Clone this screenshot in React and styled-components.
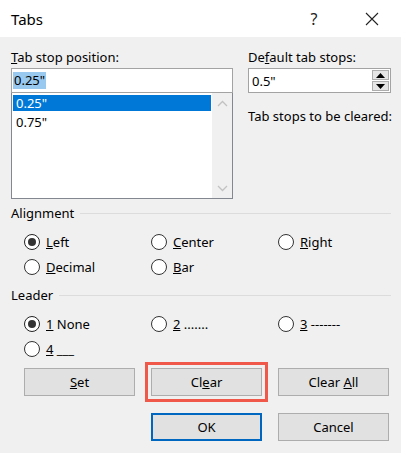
import React from 'react';
import styled, { createGlobalStyle } from 'styled-components';

const GlobalStyle = createGlobalStyle`
  html, body { margin: 0; padding: 0; background: #f0f0f0; }
  body { font-family: 'Noto Sans', 'Open Sans', sans-serif; font-size: 13px; color: #000; }
  * { box-sizing: border-box; }
`;

const Dialog = styled.div`
  width: 401px;
  height: 453px;
  background: #f0f0f0;
  display: flex;
  flex-direction: column;
`;

const TitleBar = styled.div`
  height: 37px;
  background: #fff;
  display: flex;
  align-items: center;
  padding-left: 11px;
  font-size: 15px;
`;

const TitleText = styled.div`
  flex: 1;
`;

const TitleBtn = styled.div`
  width: 58px;
  height: 37px;
  display: flex;
  align-items: center;
  justify-content: center;
  font-size: 16px;
  color: #222;
`;

const Body = styled.div`
  padding: 12px 10px 0 11px;
  display: flex;
  flex-direction: column;
`;

const TopRow = styled.div`
  display: flex;
  gap: 15px;
`;

const Col = styled.div`
  display: flex;
  flex-direction: column;
  width: ${p => p.$w}px;
`;

const Label = styled.div`
  line-height: 16px;
  height: 16px;
  margin-bottom: 3px;
  white-space: nowrap;
`;

const Input = styled.div`
  height: 25px;
  background: #fff;
  border: 1px solid #a3a3a3;
  display: flex;
  align-items: center;
  padding-left: 1px;
  position: relative;
`;

const Selected = styled.span`
  background: #99c9ef;
  padding: 0 1px;
  line-height: 17px;
`;

const ListBox = styled.div`
  height: 107px;
  margin-top: -1px;
  background: #fff;
  border: 1px solid #828790;
  display: flex;
`;

const Items = styled.div`
  flex: 1;
  padding: 2px 1px;
  display: flex;
  flex-direction: column;
  gap: 3px;
`;

const Item = styled.div`
  height: 16px;
  line-height: 16px;
  padding-left: 3px;
  background: ${p => (p.$active ? '#0078d7' : 'transparent')};
  color: ${p => (p.$active ? '#fff' : '#000')};
`;

const Scroll = styled.div`
  width: 20px;
  background: #f0f0f0;
  display: flex;
  flex-direction: column;
  justify-content: space-between;
  align-items: center;
  padding: 7px 0 6px;
`;

const SpinWrap = styled.div`
  position: absolute;
  right: 1px;
  top: 1px;
  bottom: 1px;
  display: flex;
  flex-direction: column;
  gap: 1px;
`;

const SpinBtn = styled.div`
  width: 17px;
  flex: 1;
  border: 1px solid #adadad;
  background: #e5e5e5;
  display: flex;
  align-items: center;
  justify-content: center;
`;

const Note = styled.div`
  margin-top: 15px;
  line-height: 16px;
  white-space: nowrap;
`;

const Group = styled.div`
  display: flex;
  align-items: center;
  gap: 6px;
  height: 16px;
  line-height: 16px;
  margin-top: ${p => p.$mt}px;
  &::after {
    content: '';
    flex: 1;
    height: 1px;
    background: #dcdcdc;
  }
`;

const RadioGrid = styled.div`
  display: grid;
  grid-template-columns: 127px 127px 127px;
  grid-auto-rows: 25px;
  padding-left: 13px;
  margin-top: 8px;
`;

const RadioItem = styled.label`
  display: flex;
  align-items: center;
  gap: 6px;
  white-space: nowrap;
`;

const Circle = styled.span`
  width: 16px;
  height: 16px;
  border-radius: 50%;
  border: 1px solid ${p => (p.$on ? '#222' : '#333')};
  background: #fff;
  display: flex;
  align-items: center;
  justify-content: center;
  &::after {
    content: '';
    width: 8px;
    height: 8px;
    border-radius: 50%;
    background: ${p => (p.$on ? '#333' : 'transparent')};
  }
`;

const ButtonRow = styled.div`
  display: grid;
  grid-template-columns: 111px 111px 111px;
  column-gap: 16px;
  padding-left: 13px;
  margin-top: ${p => p.$mt}px;
`;

const Button = styled.div`
  height: 28px;
  grid-column: ${p => p.$col || 'auto'};
  background: #e1e1e1;
  border: ${p => (p.$default ? '2px solid #0067c0' : '1px solid #adadad')};
  display: flex;
  align-items: center;
  justify-content: center;
  position: relative;
`;

const Highlight = styled.div`
  position: absolute;
  left: -7px;
  top: -7px;
  right: -7px;
  bottom: -7px;
  border: 3px solid #f0584a;
  pointer-events: none;
`;

const radios1 = [
  { k: 'L', rest: 'eft', on: true },
  { k: 'C', rest: 'enter' },
  { k: 'R', rest: 'ight' },
  { k: 'D', rest: 'ecimal' },
  { k: 'B', rest: 'ar' },
];

const radios2 = [
  { k: '1', rest: ' None', on: true },
  { k: '2', rest: ' .......' },
  { k: '3', rest: ' -------' },
  { k: '4', rest: ' ___' },
];

const Radio = ({ k, rest, on }) => (
  <RadioItem>
    <Circle $on={on} />
    <span><u>{k}</u>{rest}</span>
  </RadioItem>
);

export default function App() {
  return (
    <>
      <GlobalStyle />
      <Dialog>
        <TitleBar>
          <TitleText>Tabs</TitleText>
          <TitleBtn>?</TitleBtn>
          <TitleBtn>
            <svg width="16" height="16" viewBox="0 0 16 16">
              <path d="M2 2 L14 14 M14 2 L2 14" stroke="#222" strokeWidth="1.1" />
            </svg>
          </TitleBtn>
        </TitleBar>
        <Body>
          <TopRow>
            <Col $w={222}>
              <Label><u>T</u>ab stop position:</Label>
              <Input><Selected>0.25"</Selected></Input>
              <ListBox>
                <Items>
                  <Item $active>0.25"</Item>
                  <Item>0.75"</Item>
                </Items>
                <Scroll>
                  <svg width="11" height="7" viewBox="0 0 11 7">
                    <path d="M1 6 L5.5 1.5 L10 6" fill="none" stroke="#c2c2c2" strokeWidth="1.3" />
                  </svg>
                  <svg width="11" height="7" viewBox="0 0 11 7">
                    <path d="M1 1 L5.5 5.5 L10 1" fill="none" stroke="#c2c2c2" strokeWidth="1.3" />
                  </svg>
                </Scroll>
              </ListBox>
            </Col>
            <Col $w={143}>
              <Label>De<u>f</u>ault tab stops:</Label>
              <Input>
                <span style={{ paddingLeft: 2 }}>0.5"</span>
                <SpinWrap>
                  <SpinBtn>
                    <svg width="9" height="5" viewBox="0 0 9 5"><path d="M0 5 L4.5 0 L9 5Z" fill="#000" /></svg>
                  </SpinBtn>
                  <SpinBtn>
                    <svg width="9" height="5" viewBox="0 0 9 5"><path d="M0 0 L4.5 5 L9 0Z" fill="#000" /></svg>
                  </SpinBtn>
                </SpinWrap>
              </Input>
              <Note>Tab stops to be cleared:</Note>
            </Col>
          </TopRow>

          <Group $mt={6}>Alignment</Group>
          <RadioGrid>
            {radios1.map(r => <Radio key={r.k} {...r} />)}
          </RadioGrid>

          <Group $mt={8}>Leader</Group>
          <RadioGrid>
            {radios2.map(r => <Radio key={r.k} {...r} />)}
          </RadioGrid>

          <ButtonRow $mt={7}>
            <Button><span><u>S</u>et</span></Button>
            <Button>
              <span>Cl<u>e</u>ar</span>
              <Highlight />
            </Button>
            <Button><span>Clear <u>A</u>ll</span></Button>
          </ButtonRow>
          <ButtonRow $mt={17}>
            <Button $col={2} $default>OK</Button>
            <Button $col={3}>Cancel</Button>
          </ButtonRow>
        </Body>
      </Dialog>
    </>
  );
}
